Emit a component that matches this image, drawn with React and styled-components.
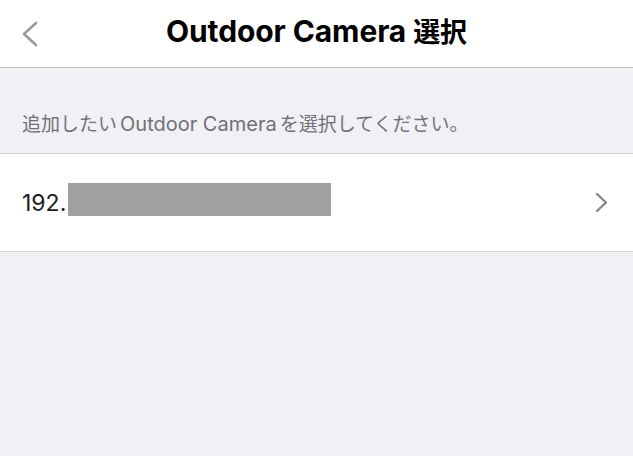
import React from "react";
import styled, { createGlobalStyle } from "styled-components";

const Global = createGlobalStyle`
  html, body { margin: 0; padding: 0; }
  body {
    background: #f0f0f5;
    font-family: Inter, "Noto Sans CJK JP", sans-serif;
    -webkit-font-smoothing: antialiased;
  }
`;

const Screen = styled.div`
  width: 633px;
  height: 456px;
  background: #f0f0f5;
  display: flex;
  flex-direction: column;
`;

const NavBar = styled.header`
  box-sizing: border-box;
  height: 68px;
  background: #ffffff;
  border-bottom: 1px solid #c4c4c7;
  display: grid;
  grid-template-columns: 80px 1fr 80px;
  align-items: center;
  padding-bottom: 6px;
`;

const BackButton = styled.button`
  border: 0;
  background: transparent;
  padding: 0 0 0 22px;
  margin-top: 6px;
  display: flex;
  align-items: center;
  cursor: pointer;
`;

const Title = styled.h1`
  margin: 0;
  text-align: center;
  font-family: Inter, "Noto Sans CJK JP", sans-serif;
  font-weight: 700;
  font-size: 30px;
  letter-spacing: -0.1px;
  color: #000;
  line-height: 36px;
`;

const Ja = styled.span`
  font-family: "Noto Sans CJK JP", sans-serif;
  font-size: ${(p) => p.$scale || 0.9}em;
`;

const SectionLabel = styled.div`
  box-sizing: border-box;
  height: 85px;
  display: flex;
  align-items: flex-end;
  padding: 0 0 17px 22px;
  font-size: 20px;
  line-height: 24px;
  color: #707075;
`;

const Gap = styled.span`
  display: inline-block;
  width: 3px;
`;

const List = styled.ul`
  margin: 0;
  padding: 0;
  list-style: none;
  background: #fff;
  border-top: 1px solid #d3d3d7;
  border-bottom: 1px solid #d3d3d7;
`;

const Row = styled.li`
  box-sizing: border-box;
  height: 97px;
  display: flex;
  align-items: center;
  justify-content: space-between;
  padding: 0 25px 0 22px;
`;

const Address = styled.span`
  display: flex;
  align-items: center;
  font-size: 23px;
  color: #1c1c1e;
`;

const Redacted = styled.span`
  display: inline-block;
  width: ${(p) => p.$w}px;
  height: 33px;
  margin-left: 2px;
  margin-bottom: 6px;
  background: #a0a0a0;
`;

const Chevron = ({ dir, w, h, color, sw }) => (
  <svg width={w} height={h} viewBox={`0 0 ${w} ${h}`} fill="none">
    <path
      d={
        dir === "left"
          ? `M${w - 2} 2 L2 ${h / 2} L${w - 2} ${h - 2}`
          : `M2 2 L${w - 2} ${h / 2} L2 ${h - 2}`
      }
      stroke={color}
      strokeWidth={sw}
      strokeLinecap="round"
      strokeLinejoin="round"
    />
  </svg>
);

export default function App() {
  return (
    <Screen>
      <Global />
      <NavBar>
        <BackButton aria-label="戻る">
          <Chevron dir="left" w={16} h={26} color="#9a9a9e" sw={2.6} />
        </BackButton>
        <Title>
          Outdoor Camera <Ja>選択</Ja>
        </Title>
        <div />
      </NavBar>
      <SectionLabel>
        <span>
          <Ja $scale={0.95}>追加したい</Ja>
          <Gap />
          Outdoor Camera
          <Gap />
          <Ja $scale={0.95}>を選択してください。</Ja>
        </span>
      </SectionLabel>
      <List>
        <Row>
          <Address>
            192.
            <Redacted $w={263} />
          </Address>
          <Chevron dir="right" w={13} h={21} color="#86868b" sw={2.4} />
        </Row>
      </List>
    </Screen>
  );
}
